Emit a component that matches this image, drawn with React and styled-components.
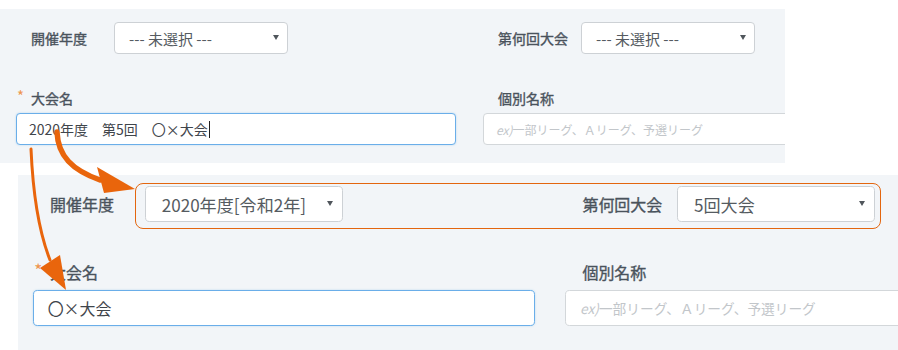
import React from "react";
import styled, { createGlobalStyle } from "styled-components";

const GlobalStyle = createGlobalStyle`
  body {
    margin: 0;
    background: #ffffff;
    font-family: "Noto Sans CJK JP", "Noto Sans", sans-serif;
  }
`;

const Page = styled.div`
  position: relative;
  width: 898px;
  height: 350px;
  overflow: hidden;
`;

const Panel = styled.section`
  box-sizing: border-box;
  width: ${(p) => p.$w}px;
  height: ${(p) => p.$h}px;
  margin-left: ${(p) => p.$x}px;
  margin-top: ${(p) => p.$y}px;
  padding: ${(p) => p.$pt}px 0 0 ${(p) => p.$pl}px;
  background: #f2f5f8;
  overflow: hidden;
`;

const FormGrid = styled.div`
  display: grid;
  grid-template-columns: ${(p) => 440 * p.$s}px ${(p) => 440 * p.$s}px;
  column-gap: ${(p) => 27 * p.$s}px;
  row-gap: ${(p) => 34 * p.$s}px;
`;

const InlineField = styled.div`
  display: flex;
  align-items: center;
`;

const StackField = styled.div`
  display: flex;
  flex-direction: column;
`;

const Label = styled.label`
  position: relative;
  box-sizing: border-box;
  display: block;
  flex: none;
  width: ${(p) => (p.$inline ? 98 * p.$s + "px" : "auto")};
  padding-left: ${(p) => 15 * p.$s}px;
  margin-bottom: ${(p) => (p.$inline ? 0 : 5 * p.$s)}px;
  font-size: ${(p) => 14 * p.$s}px;
  line-height: ${(p) => 20 * p.$s}px;
  font-weight: 400;
  -webkit-text-stroke: 0.35px currentColor;
  color: #4a535c;
`;

const Required = styled.span`
  position: absolute;
  left: ${(p) => 1 * p.$s}px;
  top: 0;
  font-size: ${(p) => 15 * p.$s}px;
  line-height: 1;
  font-weight: 400;
  -webkit-text-stroke: 0;
  color: #ee9550;
`;

const SelectBox = styled.div`
  box-sizing: border-box;
  display: flex;
  align-items: center;
  justify-content: space-between;
  width: ${(p) => 174 * p.$s}px;
  height: ${(p) => 32 * p.$s}px;
  padding: 0 ${(p) => 8 * p.$s}px 0 ${(p) => 14 * p.$s}px;
  background: #ffffff;
  border: 1px solid #cdd1d5;
  border-radius: ${(p) => 4 * p.$s}px;
  font-size: ${(p) => 15 * p.$s}px;
  color: #555b61;
`;

const Caret = styled.span`
  width: 0;
  height: 0;
  border-left: ${(p) => 3.5 * p.$s}px solid transparent;
  border-right: ${(p) => 3.5 * p.$s}px solid transparent;
  border-top: ${(p) => 5 * p.$s}px solid #50565c;
  margin-top: ${(p) => -2 * p.$s}px;
`;

const TextBox = styled.div`
  box-sizing: border-box;
  display: flex;
  align-items: center;
  width: 100%;
  height: ${(p) => 32 * p.$s}px;
  padding-left: ${(p) => 12 * p.$s}px;
  background: #ffffff;
  border: 1px solid ${(p) => (p.$focus ? "#6aaee9" : "#d3d7da")};
  border-radius: ${(p) => 4 * p.$s}px;
  box-shadow: ${(p) => (p.$focus ? "0 0 2px rgba(102, 175, 233, 0.45)" : "none")};
  font-size: ${(p) => 14 * p.$s}px;
  color: #3f454b;
  white-space: nowrap;
`;

const TextCursor = styled.span`
  display: inline-block;
  width: 1px;
  height: ${(p) => 17 * p.$s}px;
  margin-left: 1px;
  background: #222;
`;

const Placeholder = styled.span`
  font-size: ${(p) => 12 * p.$s}px;
  color: #c2c6ca;
  em {
    font-style: italic;
  }
`;

const Highlight = styled.div`
  position: absolute;
  left: 135px;
  top: 183px;
  width: 746px;
  height: 46px;
  box-sizing: border-box;
  border: 1.5px solid #e3660f;
  border-radius: 8px;
  pointer-events: none;
`;

const Arrows = styled.svg`
  position: absolute;
  left: 0;
  top: 0;
  pointer-events: none;
`;

const TournamentForm = ({ s, year, round, name, focus }) => (
  <FormGrid $s={s}>
    <InlineField>
      <Label $s={s} $inline>開催年度</Label>
      <SelectBox $s={s}>
        <span>{year}</span>
        <Caret $s={s} />
      </SelectBox>
    </InlineField>
    <InlineField>
      <Label $s={s} $inline>第何回大会</Label>
      <SelectBox $s={s}>
        <span>{round}</span>
        <Caret $s={s} />
      </SelectBox>
    </InlineField>
    <StackField>
      <Label $s={s}>
        <Required $s={s}>*</Required>
        大会名
      </Label>
      <TextBox $s={s} $focus>
        {name}
        {focus && <TextCursor $s={s} />}
      </TextBox>
    </StackField>
    <StackField>
      <Label $s={s}>個別名称</Label>
      <TextBox $s={s}>
        <Placeholder $s={s}>
          <em>ex)</em>一部リーグ、Ａリーグ、予選リーグ
        </Placeholder>
      </TextBox>
    </StackField>
  </FormGrid>
);

const App = () => (
  <>
    <GlobalStyle />
    <Page>
      <Panel $w={785} $h={154} $x={0} $y={9} $pt={13} $pl={16}>
        <TournamentForm
          s={1}
          year="--- 未選択 ---"
          round="--- 未選択 ---"
          name="2020年度　第5回　〇×大会"
          focus
        />
      </Panel>
      <Panel $w={880} $h={175} $x={18} $y={12} $pt={11} $pl={15}>
        <TournamentForm
          s={1.14}
          year="2020年度[令和2年]"
          round="5回大会"
          name="〇×大会"
        />
      </Panel>
      <Highlight />
      <Arrows width="898" height="350" viewBox="0 0 898 350">
        <path
          d="M57 132 C58 156 72 170 100 180"
          fill="none"
          stroke="#e9650c"
          strokeWidth="5.5"
          strokeLinecap="round"
        />
        <polygon points="97,167 104,193 135,189" fill="#e9650c" />
        <path
          d="M31 149 C33 195 39 232 50 260"
          fill="none"
          stroke="#e9650c"
          strokeWidth="3"
          strokeLinecap="round"
        />
        <polygon points="40,268 60,255 66,290" fill="#e9650c" />
      </Arrows>
    </Page>
  </>
);

export default App;
